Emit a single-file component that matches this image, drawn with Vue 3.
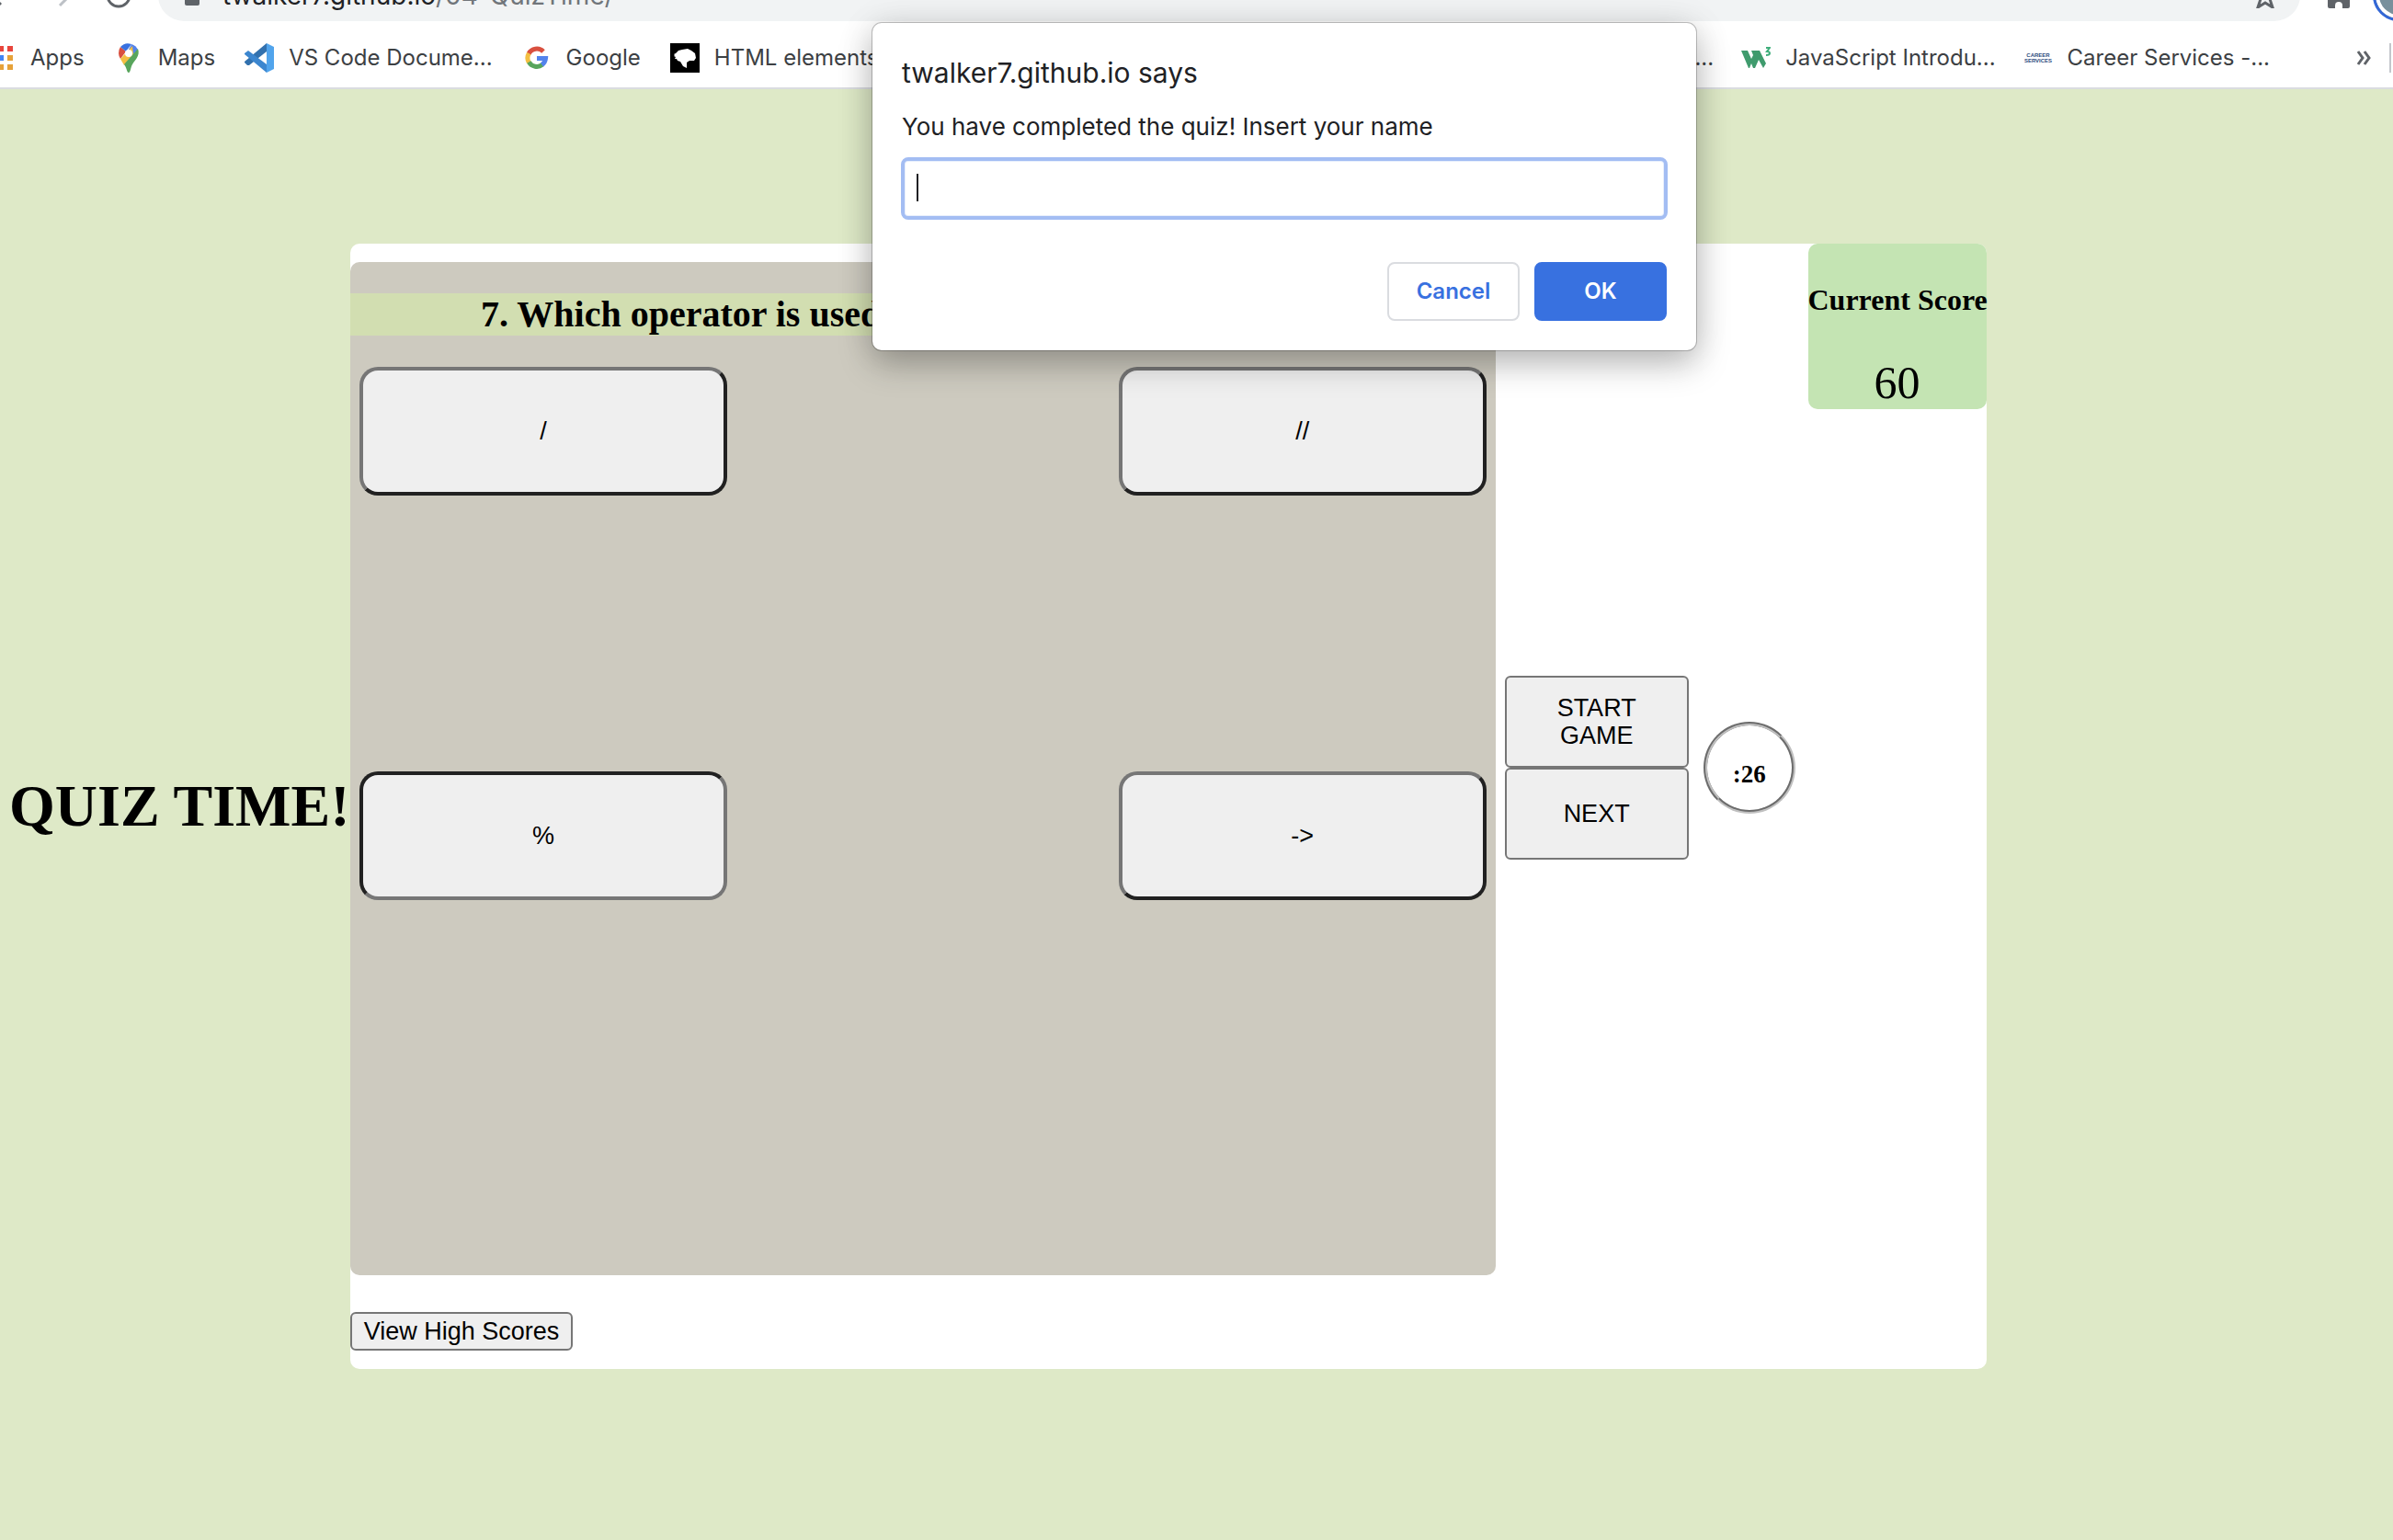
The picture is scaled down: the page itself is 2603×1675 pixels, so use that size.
<script setup>
import { ref } from 'vue'

const name = ref('')
const answers = [
  { id: 'a', text: '/', picked: false },
  { id: 'b', text: '//', picked: false },
  { id: 'c', text: '%', picked: true },
  { id: 'd', text: '->', picked: false }
]
</script>

<template>
  <div class="window">
    <header class="chrome">
      <div class="toolbar">
        <svg class="nav" viewBox="0 0 172 56" aria-hidden="true">
          <path d="M-12 26L1 38" fill="none" stroke="#5f6368" stroke-width="3" />
          <path d="M65 39L77 27" fill="none" stroke="#bdc1c6" stroke-width="3" />
          <circle cx="129" cy="28" r="12" fill="none" stroke="#5f6368" stroke-width="3" />
        </svg>
        <div class="omnibox">
          <svg class="lock" viewBox="0 0 16 22" aria-hidden="true"><rect y="6" width="16" height="16" rx="2" fill="#5f6368" /></svg>
          <span class="url">twalker7.github.io<span class="path">/04-QuizTime/</span></span>
          <svg class="star" viewBox="0 0 28 28" aria-hidden="true"><path d="M14 3l3 8 9 1-7 6 3 9-8-5-8 5 3-9-7-6 9-1z" fill="none" stroke="#5f6368" stroke-width="3" /></svg>
        </div>
        <svg class="puzzle" viewBox="0 0 26 28" aria-hidden="true"><path d="M1 4h8a4 4 0 0 1 8 0h6v9a4 4 0 0 1 2 6v7q0 2-2 2h-6v-3a4 4 0 0 0-8 0v3H3q-2 0-2-2z" fill="#5f6368" /></svg>
        <span class="avatar"></span>
      </div>
      <nav class="bookmarks">
        <div class="group">
          <a href="#">
            <svg class="apps" viewBox="0 0 32 32" aria-hidden="true">
              <path d="M0 3h6v6H0zm10 0h6v6h-6zm10 0h6v6h-6z" fill="#e8453c" />
              <path d="M10 13h6v6h-6z" fill="#4285f4" />
              <path d="M20 13h6v6h-6zM10 23h6v6h-6zm10 0h6v6h-6z" fill="#e6a23a" />
            </svg>Apps</a>
          <a href="#">
            <svg viewBox="0 0 32 32" aria-hidden="true">
              <path d="M5 11a11 11 0 0 1 2-7l6 5-6 8q-2-3-2-6z" fill="#d9503f" />
              <path d="M7 4a11 11 0 0 1 12-3l-6 8z" fill="#3871e0" />
              <path d="M19 1a11 11 0 0 1 7 6L12 22l-2-4z" fill="#5383ec" />
              <path d="M7 17L20 3l1 9-10 12z" fill="#f3bf42" />
              <path d="M26 6c3 8-4 13-6 17-2 3-2 9-4 9s-2-5-5-9z" fill="#58a55c" />
              <circle cx="16" cy="11" r="4" fill="#fff" />
            </svg>Maps</a>
          <a href="#">
            <svg viewBox="0 0 32 32" aria-hidden="true">
              <path d="M24 0v9L5 24 3 24 0 21v-1z" fill="#3271ae" />
              <path d="M0 11l4-3 20 15v9L0 12z" fill="#3c86cf" />
              <path d="M24 0l8 4v24l-8 4z" fill="#51a4ec" />
            </svg>VS Code Docume...</a>
          <a href="#">
            <svg viewBox="0 0 32 32" aria-hidden="true">
              <g fill="none" stroke-width="5">
                <path d="M7 11.500A10 10 0 0 1 23 9" stroke="#d9503f" />
                <path d="M7.300 21A10 10 0 0 1 7.300 11" stroke="#f3bf42" />
                <path d="M22 23.300A10 10 0 0 1 7.300 20.500" stroke="#58a55c" />
                <path d="M16 16.500h9.500A10 10 0 0 1 21.500 23.500" stroke="#5383ec" />
              </g>
            </svg>Google</a>
          <a href="#">
            <svg viewBox="0 0 32 32" aria-hidden="true">
              <path d="M0 0h32v32H0z" />
              <path d="M6 11l3-3 4-1 6-1 4 2 4 3 1 5-2 3-5 0-3 2v6l-4-2-3-5-3-1-1-2-2 0 1-2-2-1 1-1-1-1z" fill="#fff" />
            </svg>HTML elements</a>
        </div>
        <div class="group right">
          <a href="#">...</a>
          <a href="#">
            <svg viewBox="0 0 32 32" aria-hidden="true">
              <path d="M0 8h7l4 9 2-4-2-5h9l7 14-3 5-5-9-4 9h-2l-2-5-2 5H8z" fill="#3f9b6d" />
              <path d="M27 5h4l-3 4q3 0 3 2t-4 2" fill="none" stroke="#3fae7b" stroke-width="2" />
            </svg>JavaScript Introdu...</a>
          <a href="#">
            <svg viewBox="0 0 32 32" aria-hidden="true">
              <text x="16" y="15" text-anchor="middle" class="mini">CAREER</text>
              <text x="16" y="21" text-anchor="middle" class="mini">SERVICES</text>
            </svg>Career Services -...</a>
          <svg class="more" viewBox="0 0 16 20" aria-hidden="true"><path d="M2 3l5 7-5 7M9 3l5 7-5 7" fill="none" stroke="#5f6368" stroke-width="3" /></svg>
          <span class="divider"></span>
        </div>
      </nav>
    </header>

    <main class="page">
      <h1>QUIZ TIME!</h1>
      <div class="card">
        <div class="game">
          <section class="quiz">
            <h2>7. Which operator is used</h2>
            <div class="answers">
              <button v-for="a in answers" :key="a.id" type="button" class="answer" :class="{ picked: a.picked }">{{ a.text }}</button>
            </div>
          </section>
          <div class="controls">
            <button type="button">START GAME</button>
            <button type="button">NEXT</button>
          </div>
          <div class="timer">:26</div>
          <aside class="score">
            <h3>Current Score</h3>
            <div class="points">60</div>
          </aside>
        </div>
        <button type="button" class="high">View High Scores</button>
      </div>
    </main>

    <form class="dialog" role="dialog" aria-labelledby="dialog-title" @submit.prevent>
      <div id="dialog-title" class="title">twalker7.github.io says</div>
      <label for="player">You have completed the quiz! Insert your name</label>
      <div class="field">
        <input id="player" v-model="name" type="text" autocomplete="off" />
        <span class="caret"></span>
      </div>
      <div class="actions">
        <button type="button">Cancel</button>
        <button type="submit" class="ok">OK</button>
      </div>
    </form>
  </div>
</template>

<style>
body {
  margin: 0;
  background: #dee9c7;
}
</style>

<style scoped>
* {
  box-sizing: border-box;
}
.window {
  position: relative;
  min-height: 100vh;
  overflow: hidden;
  background: #dee9c7;
  font-family: "Liberation Serif", "Times New Roman", serif;
  color: #000;
}
.chrome {
  background: #fff;
  border-bottom: 2px solid #dadce0;
  font-family: Inter, "Liberation Sans", sans-serif;
  overflow: hidden;
}
.toolbar {
  display: flex;
  align-items: center;
  height: 56px;
  margin-top: -33px;
}
.nav {
  width: 172px;
  height: 56px;
  flex: none;
}
.omnibox {
  flex: 1;
  display: flex;
  align-items: center;
  height: 56px;
  padding: 0 24px 0 29px;
  border-radius: 28px;
  background: #f1f3f4;
}
.lock {
  width: 16px;
  height: 22px;
}
.url {
  flex: 1;
  margin-left: 25px;
  font-size: 28px;
  line-height: 34px;
  color: #202124;
}
.path {
  color: #70757a;
}
.star {
  width: 28px;
  height: 28px;
}
.puzzle {
  width: 26px;
  height: 28px;
  margin: 0 24px 0 29px;
}
.avatar {
  flex: none;
  width: 56px;
  height: 56px;
  margin-right: -34px;
  border: 3px solid #3367d6;
  border-radius: 50%;
  background: #78909c;
  box-shadow: inset 0 0 0 4px #fff;
}
.bookmarks {
  display: flex;
  justify-content: space-between;
  height: 72px;
  padding-top: 8px;
  white-space: nowrap;
}
.group {
  display: flex;
  align-items: center;
  gap: 32px;
}
.group.right {
  gap: 30px;
}
.group a {
  display: flex;
  align-items: center;
  gap: 16px;
  height: 32px;
  font-size: 24px;
  line-height: 32px;
  color: #3c4043;
  text-decoration: none;
}
.group a svg {
  width: 32px;
  height: 32px;
  flex: none;
}
.group a .apps {
  margin-left: -12px;
  margin-right: -3px;
}
.mini {
  font: bold 6px "Liberation Sans", sans-serif;
  fill: #2b4a7d;
}
.more {
  width: 16px;
  height: 20px;
  margin-left: 64px;
}
.divider {
  width: 4px;
  height: 32px;
  margin-left: -10px;
  border-left: 2px solid #c4c7cc;
}

.page {
  display: flex;
  align-items: center;
  padding: 168px 17% 186px 10px;
}
h1 {
  flex: none;
  width: 371px;
  margin: 0;
  font-size: 64px;
  line-height: 74px;
  white-space: nowrap;
}
.card {
  flex: 1;
  padding-bottom: 20px;
  border-radius: 10px;
  background: #fff;
}
.game {
  display: flex;
  align-items: center;
}
.quiz {
  width: 70%;
  min-height: 1102px;
  margin-top: 20px;
  padding-top: 34px;
  border-radius: 10px;
  background: #cdcabf;
}
h2 {
  margin: 0 0 34px;
  padding-left: 142px;
  font-size: 40px;
  line-height: 46px;
  background: #d2deb1;
}
.answers {
  display: grid;
  grid-template-columns: 400px 400px;
  justify-content: space-between;
  row-gap: 300px;
  padding: 0 10px;
}
button {
  font-family: "Liberation Sans", Arial, sans-serif;
  font-size: 27px;
  line-height: 30px;
  color: #000;
  background: #efefef;
  border: 2px solid #767676;
  border-radius: 6px;
}
.answer {
  height: 140px;
  border: 4px solid;
  border-color: #767676 #212121 #212121 #767676;
  border-radius: 20px;
}
.answer.picked {
  border-color: #212121 #767676 #767676 #212121;
}
.controls {
  display: flex;
  flex-direction: column;
  width: 200px;
  margin: 18px 16px 0 10px;
}
.controls button {
  height: 100px;
  padding: 0 40px;
}
.timer {
  width: 100px;
  height: 100px;
  margin-top: 18px;
  padding-top: 13px;
  border: 4px groove #c0c0c0;
  border-radius: 50%;
  font-size: 27px;
  font-weight: bold;
  line-height: 80px;
  text-align: center;
}
.score {
  align-self: flex-start;
  width: 194px;
  height: 180px;
  margin-left: auto;
  padding-top: 43px;
  border-radius: 10px;
  background: #c4e4b3;
  text-align: center;
}
h3 {
  margin: 0 0 42px;
  font-size: 32px;
  line-height: 36px;
  white-space: nowrap;
}
.points {
  font-size: 50px;
  line-height: 60px;
}
.high {
  display: block;
  width: 242px;
  height: 42px;
  margin-top: 40px;
  padding: 0;
}

.dialog {
  position: absolute;
  top: 25px;
  left: 949px;
  width: 896px;
  padding: 34px 32px 32px;
  border-radius: 10px;
  background: #fff;
  box-shadow: 0 0 0 1px rgba(0, 0, 0, 0.22), 0 14px 36px rgba(0, 0, 0, 0.27), 0 0 40px rgba(0, 0, 0, 0.08);
  font-family: Inter, "Liberation Sans", sans-serif;
  color: #202124;
}
.title {
  font-size: 30px;
  line-height: 40px;
}
label {
  display: block;
  margin-top: 22px;
  font-size: 26px;
  line-height: 34px;
}
.field {
  position: relative;
  margin: 16px -1px 46px;
}
input {
  display: block;
  width: 100%;
  height: 68px;
  padding: 0 16px;
  border: 4px solid #a3bdf3;
  border-radius: 8px;
  outline: none;
  background: #fff;
  font: 26px Inter, sans-serif;
  box-shadow: inset 0 0 0 1px #e8effc;
}
.caret {
  position: absolute;
  left: 17px;
  top: 18px;
  width: 2px;
  height: 30px;
  background: #202124;
}
.actions {
  display: flex;
  justify-content: flex-end;
  gap: 16px;
}
.actions button {
  width: 144px;
  height: 64px;
  border: 2px solid #dadce0;
  border-radius: 8px;
  background: #fff;
  color: #3871e0;
  font-family: Inter, "Liberation Sans", sans-serif;
  font-size: 24px;
  font-weight: 600;
}
.actions .ok {
  border-color: #3871e0;
  background: #3871e0;
  color: #fff;
}
</style>
